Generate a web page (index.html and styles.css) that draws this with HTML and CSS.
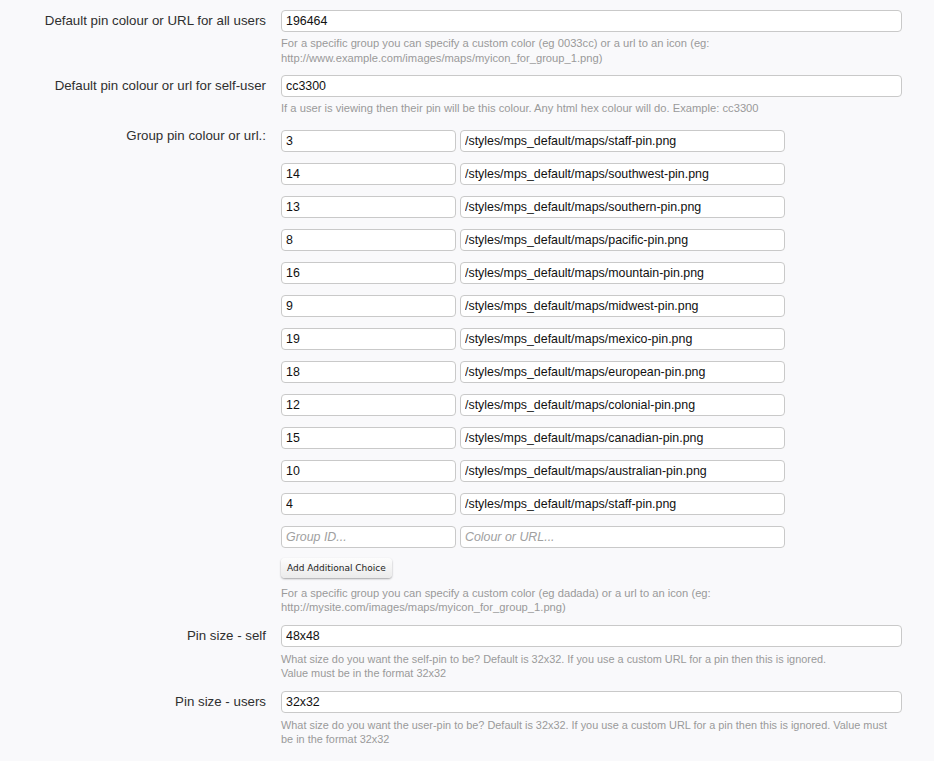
FILE: index.html
```html
<!DOCTYPE html>
<html>
<head>
<meta charset="utf-8">
<link rel="stylesheet" href="styles.css">
</head>
<body>
<form class="form">
  <div class="row">
    <div class="label">Default pin colour or URL for all users</div>
    <div class="field">
      <input class="text wide" type="text" value="196464">
      <p class="hint">For a specific group you can specify a custom color (eg 0033cc) or a url to an icon (eg:<br>http://www.example.com/images/maps/myicon_for_group_1.png)</p>
    </div>
  </div>
  <div class="row">
    <div class="label">Default pin colour or url for self-user</div>
    <div class="field">
      <input class="text wide" type="text" value="cc3300">
      <p class="hint">If a user is viewing then their pin will be this colour. Any html hex colour will do. Example: cc3300</p>
    </div>
  </div>
  <div class="row">
    <div class="label">Group pin colour or url.:</div>
    <div class="field group-field">
      <div class="pairs">
        <div class="pair"><input class="text gid" type="text" value="3"><input class="text url" type="text" value="/styles/mps_default/maps/staff-pin.png"></div>
        <div class="pair"><input class="text gid" type="text" value="14"><input class="text url" type="text" value="/styles/mps_default/maps/southwest-pin.png"></div>
        <div class="pair"><input class="text gid" type="text" value="13"><input class="text url" type="text" value="/styles/mps_default/maps/southern-pin.png"></div>
        <div class="pair"><input class="text gid" type="text" value="8"><input class="text url" type="text" value="/styles/mps_default/maps/pacific-pin.png"></div>
        <div class="pair"><input class="text gid" type="text" value="16"><input class="text url" type="text" value="/styles/mps_default/maps/mountain-pin.png"></div>
        <div class="pair"><input class="text gid" type="text" value="9"><input class="text url" type="text" value="/styles/mps_default/maps/midwest-pin.png"></div>
        <div class="pair"><input class="text gid" type="text" value="19"><input class="text url" type="text" value="/styles/mps_default/maps/mexico-pin.png"></div>
        <div class="pair"><input class="text gid" type="text" value="18"><input class="text url" type="text" value="/styles/mps_default/maps/european-pin.png"></div>
        <div class="pair"><input class="text gid" type="text" value="12"><input class="text url" type="text" value="/styles/mps_default/maps/colonial-pin.png"></div>
        <div class="pair"><input class="text gid" type="text" value="15"><input class="text url" type="text" value="/styles/mps_default/maps/canadian-pin.png"></div>
        <div class="pair"><input class="text gid" type="text" value="10"><input class="text url" type="text" value="/styles/mps_default/maps/australian-pin.png"></div>
        <div class="pair"><input class="text gid" type="text" value="4"><input class="text url" type="text" value="/styles/mps_default/maps/staff-pin.png"></div>
        <div class="pair"><input class="text gid" type="text" placeholder="Group ID..."><input class="text url" type="text" placeholder="Colour or URL..."></div>
      </div>
      <button class="btn" type="button">Add Additional Choice</button>
      <p class="hint hint-after-btn">For a specific group you can specify a custom color (eg dadada) or a url to an icon (eg:<br>http://mysite.com/images/maps/myicon_for_group_1.png)</p>
    </div>
  </div>
  <div class="row">
    <div class="label">Pin size - self</div>
    <div class="field">
      <input class="text wide" type="text" value="48x48">
      <p class="hint hint-sm">What size do you want the self-pin to be? Default is 32x32. If you use a custom URL for a pin then this is ignored.<br>Value must be in the format 32x32</p>
    </div>
  </div>
  <div class="row">
    <div class="label">Pin size - users</div>
    <div class="field">
      <input class="text wide" type="text" value="32x32">
      <p class="hint hint-sm">What size do you want the user-pin to be? Default is 32x32. If you use a custom URL for a pin then this is ignored. Value must<br>be in the format 32x32</p>
    </div>
  </div>
</form>
</body>
</html>
```
FILE: styles.css
```css
html, body {
  margin: 0;
  padding: 0;
  background: #f9f9fb;
}
body {
  font-family: "Liberation Sans", Arial, sans-serif;
  color: #333;
}
.form {
  padding-top: 10px;
  width: 902px;
}
.row {
  display: flex;
  margin-bottom: 9px;
}
.label {
  width: 266px;
  flex: none;
  text-align: right;
  font-size: 13.3px;
  line-height: 22px;
  color: #2f2f2f;
}
.field {
  flex: 1;
  min-width: 0;
  padding-left: 15px;
}
.group-field {
  padding-top: 5px;
}
.text {
  display: block;
  height: 22px;
  box-sizing: border-box;
  border: 1px solid #c9c9c9;
  border-radius: 4px;
  background: #fff;
  font-family: "Liberation Sans", Arial, sans-serif;
  font-size: 12.4px;
  color: #111;
  padding: 0 4px;
  margin: 0;
  outline: none;
}
.text::placeholder {
  color: #a0a0a0;
  font-style: italic;
}
.wide {
  width: 100%;
}
.hint {
  margin: 4px 0 0;
  font-size: 11.2px;
  line-height: 15px;
  color: #9a9a9a;
  white-space: nowrap;
}
.hint-sm {
  font-size: 10.9px;
  line-height: 14px;
  margin-top: 5px;
  margin-bottom: 2px;
}
.hint-after-btn {
  margin-top: 8px;
  margin-bottom: 2px;
  line-height: 14px;
}
.pairs {
  display: flex;
  flex-direction: column;
  gap: 11px;
}
.pair {
  display: flex;
  gap: 4px;
}
.gid {
  width: 175px;
}
.url {
  width: 325px;
}
.btn {
  display: block;
  margin-top: 10px;
  height: 20px;
  padding: 0 6px;
  border: none;
  border-radius: 4px;
  background: linear-gradient(#fdfdfd, #ebebeb);
  box-shadow: 0 1px 2px rgba(0,0,0,0.35);
  font-family: "DejaVu Sans", sans-serif;
  font-size: 9px;
  color: #222;
}
```
